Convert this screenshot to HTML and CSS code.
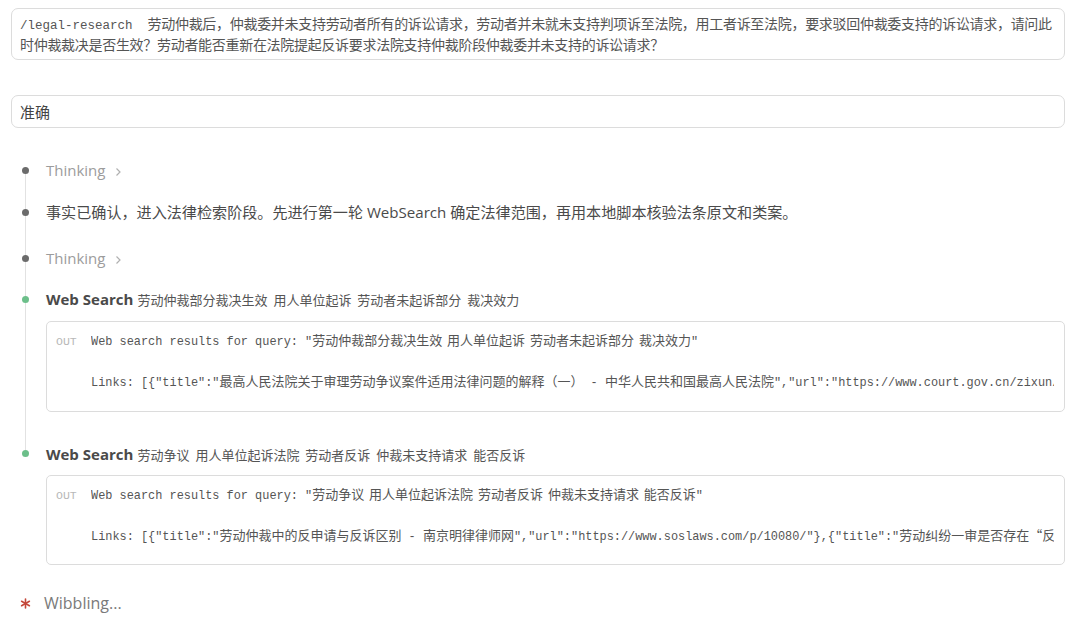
FILE: index.html
```html
<!DOCTYPE html>
<html lang="zh-CN">
<head>
    <meta charset="UTF-8">
    <meta name="viewport" content="width=device-width, initial-scale=1.0">
    <title>legal-research</title>
    <link rel="stylesheet" href="styles.css">
</head>
<body>
    <div class="page">
        <div class="prompt"><span class="cmd">/legal-research  </span>劳动仲裁后，仲裁委并未支持劳动者所有的诉讼请求，劳动者并未就未支持判项诉至法院，用工者诉至法院，要求驳回仲裁委支持的诉讼请求，请问此时仲裁裁决是否生效？劳动者能否重新在法院提起反诉要求法院支持仲裁阶段仲裁委并未支持的诉讼请求？</div>

        <div class="answer">准确</div>

        <ol class="steps">
            <li class="step first">
                <div class="rail"><i class="seg top"></i><b class="dot"></b><i class="seg"></i></div>
                <div class="body">
                    <span class="thinking">Thinking
                        <svg class="chev" width="7" height="10" viewBox="0 0 7 10"><path d="M1.5 1.5 L5 5 L1.5 8.5" fill="none" stroke="#b0b0b0" stroke-width="1.2"/></svg>
                    </span>
                </div>
            </li>
            <li class="step gap-lg">
                <div class="rail"><i class="seg top"></i><b class="dot"></b><i class="seg"></i></div>
                <div class="body"><span class="say">事实已确认，进入法律检索阶段。先进行第一轮 WebSearch 确定法律范围，再用本地脚本核验法条原文和类案。</span></div>
            </li>
            <li class="step gap-sm">
                <div class="rail"><i class="seg top"></i><b class="dot"></b><i class="seg"></i></div>
                <div class="body">
                    <span class="thinking">Thinking
                        <svg class="chev" width="7" height="10" viewBox="0 0 7 10"><path d="M1.5 1.5 L5 5 L1.5 8.5" fill="none" stroke="#b0b0b0" stroke-width="1.2"/></svg>
                    </span>
                </div>
            </li>
            <li class="step tool">
                <div class="rail"><i class="seg top"></i><b class="dot ok"></b><i class="seg"></i></div>
                <div class="body">
                    <div class="tool-head"><strong>Web Search</strong> <span class="query">劳动仲裁部分裁决生效 用人单位起诉 劳动者未起诉部分 裁决效力</span></div>
                    <div class="out">
                        <span class="out-label">OUT</span>
                        <div class="out-text">Web search results for query: "<span class="han">劳动仲裁部分裁决生效 用人单位起诉 劳动者未起诉部分 裁决效力</span>"

Links: [{"title":"<span class="han">最高人民法院关于审理劳动争议案件适用法律问题的解释（一）</span> - <span class="han">中华人民共和国最高人民法院</span>","url":"https://www.court.gov.cn/zixun/xiangqing/282121.html"}]</div>
                    </div>
                </div>
            </li>
            <li class="step tool last">
                <div class="rail"><i class="seg top"></i><b class="dot ok"></b></div>
                <div class="body">
                    <div class="tool-head"><strong>Web Search</strong> <span class="query">劳动争议 用人单位起诉法院 劳动者反诉 仲裁未支持请求 能否反诉</span></div>
                    <div class="out">
                        <span class="out-label">OUT</span>
                        <div class="out-text">Web search results for query: "<span class="han">劳动争议 用人单位起诉法院 劳动者反诉 仲裁未支持请求 能否反诉</span>"

Links: [{"title":"<span class="han">劳动仲裁中的反申请与反诉区别</span> - <span class="han">南京明律律师网</span>","url":"https://www.soslaws.com/p/10080/"},{"title":"<span class="han">劳动纠纷一审是否存在“反诉”</span>"}]</div>
                    </div>
                </div>
            </li>
        </ol>

        <div class="status">
            <svg class="star" width="11" height="11" viewBox="0 0 11 11">
                <g stroke="#c4473a" stroke-width="1.6" stroke-linecap="round">
                    <path d="M5.5 1 V10"/>
                    <path d="M1.6 3.25 L9.4 7.75"/>
                    <path d="M1.6 7.75 L9.4 3.25"/>
                </g>
            </svg>
            <span>Wibbling...</span>
        </div>
    </div>
</body>
</html>
```

FILE: styles.css
```css
body { margin: 0; background: #fff; color: #444; font-family: "Open Sans", "Noto Sans CJK SC", sans-serif; }
.page { padding: 8px 15px 0 11px; }

/* input boxes */
.prompt { border: 1px solid #dcdcdc; border-radius: 7px; padding: 4px 5px 5px 8px; font-family: "Noto Sans CJK SC", sans-serif; font-size: 14px; letter-spacing: -0.3px; line-height: 20px; color: #555; }
.prompt .cmd { font-family: "Liberation Mono", monospace; font-size: 12.5px; letter-spacing: 0; white-space: pre; line-height: 16px; }
.answer { margin-top: 35px; border: 1px solid #dcdcdc; border-radius: 7px; padding: 6px 9px 5px 8px; font-family: "Noto Sans CJK SC", sans-serif; font-size: 15px; line-height: 20px; color: #444; }

/* timeline */
.steps { list-style: none; margin: 31px 0 0; padding: 0; }
.step { display: grid; grid-template-columns: 28px minmax(0, 1fr); column-gap: 7px; }
.step .body { min-width: 0; line-height: 22px; padding-bottom: 20px; }
.step.gap-lg .body { padding-bottom: 24px; }
.step.gap-sm .body { padding-bottom: 19px; }
.step.tool .body { padding-bottom: 31px; }
.step.last .body { padding-bottom: 27px; }

.rail { display: flex; flex-direction: column; align-items: center; }
.rail .seg { display: block; width: 1px; background: #e2e2e2; flex: 1; }
.rail .seg.top { flex: none; height: 7.5px; }
.step.first .seg.top { background: transparent; }
.dot { display: block; width: 7px; height: 7px; border-radius: 50%; background: #6b6b6b; flex: none; }
.dot.ok { background: #6cbf8a; }

.thinking { font-size: 15px; color: #9c9c9c; }
.chev { margin-left: 6px; vertical-align: -1px; }
.say { font-size: 15.1px; color: #4a4a4a; }

.tool-head strong { font-size: 15px; font-weight: 700; color: #4a4a4a; }
.query { font-family: "Noto Sans CJK SC", sans-serif; font-size: 13px; color: #555; word-spacing: 3px; line-height: 16px; }

.out { display: flex; margin-top: 11px; border: 1px solid #dcdcdc; border-radius: 5px; padding: 10px 10px 17px 9px; }
.step.last .out { margin-top: 10px; }
.out-label { flex: none; width: 35px; font-family: "Liberation Mono", monospace; font-size: 11.5px; line-height: 20.5px; color: #b8b8b8; }
.out-text { flex: 1; min-width: 0; overflow: hidden; white-space: pre; font-family: "Liberation Mono", "Noto Sans CJK SC", monospace; font-size: 11.9px; line-height: 20.5px; color: #555; }
.out-text .han { font-family: "Noto Sans CJK SC", sans-serif; font-size: 13px; line-height: 14px; word-spacing: 2px; }

.status { display: flex; align-items: center; gap: 13px; padding-left: 9px; line-height: 22px; font-size: 16px; color: #7a7a7a; }
.star { flex: none; }
```
